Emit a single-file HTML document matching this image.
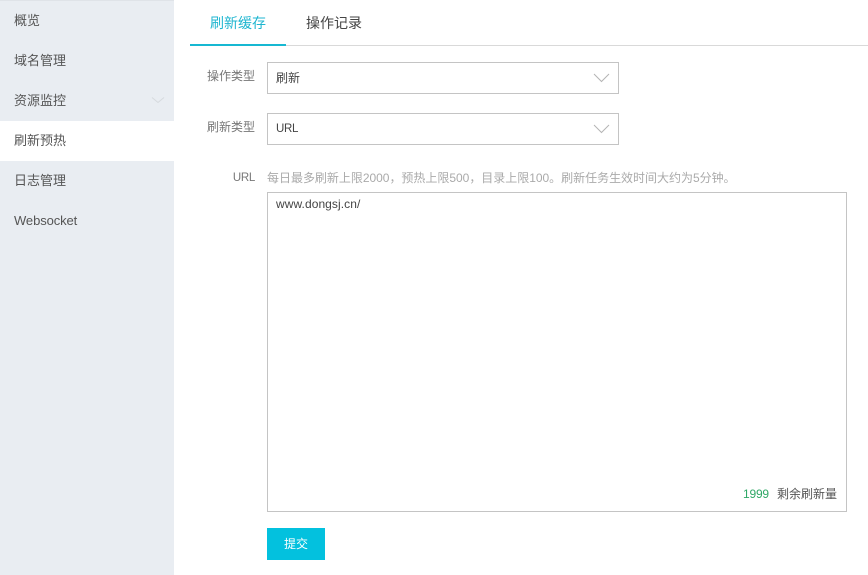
<!DOCTYPE html>
<html lang="zh">
<head>
<meta charset="utf-8">
<style>
html,body{margin:0;padding:0;width:868px;height:575px;overflow:hidden;background:#fff;}
body{position:relative;font-family:"Liberation Sans","Noto Sans CJK SC",sans-serif;font-size:12px;color:#333;}
.a{position:absolute;white-space:nowrap;}
#side{position:absolute;left:0;top:0;width:174px;height:575px;background:#e9edf2;border-top:1px solid #dfe3e8;box-sizing:border-box;}
.m{position:absolute;left:14px;font-size:13px;line-height:20px;color:#555;white-space:nowrap;}
.box{position:absolute;border:1px solid #c4c4c4;box-sizing:border-box;background:#fff;}
.lab{position:absolute;right:613px;color:#777;line-height:16px;white-space:nowrap;}
</style>
</head>
<body>
<div id="side"></div>
<div class="a" style="left:0;top:121px;width:174px;height:40px;background:#fff"></div>
<div class="m" style="top:11px">概览</div>
<div class="m" style="top:51px">域名管理</div>
<div class="m" style="top:91px">资源监控</div>
<div class="m" style="top:131px">刷新预热</div>
<div class="m" style="top:171px">日志管理</div>
<div class="m" style="top:211px;letter-spacing:-0.1px">Websocket</div>
<svg class="a" style="left:151px;top:96px" width="14" height="8"><path d="M1 1.5L7 6.5L13 1.5" fill="none" stroke="#d6dade" stroke-width="1"/></svg>

<div class="a" style="left:190px;top:45px;width:678px;height:1px;background:#d9d9d9"></div>
<div class="a" style="left:190px;top:44px;width:96px;height:2px;background:#17b8d2"></div>
<div class="a" style="left:210px;top:13px;font-size:14px;line-height:20px;color:#1fb6d0">刷新缓存</div>
<div class="a" style="left:306px;top:13px;font-size:14px;line-height:20px;color:#444">操作记录</div>

<div class="lab" style="top:68px">操作类型</div>
<div class="box" style="left:267px;top:62px;width:352px;height:32px"></div>
<div class="a" style="left:276px;top:70px;line-height:16px;color:#444">刷新</div>
<svg class="a" style="left:593px;top:73px" width="18" height="11"><path d="M1 1L8.5 8.5L16 1" fill="none" stroke="#b4b4b4" stroke-width="1"/></svg>

<div class="lab" style="top:119px">刷新类型</div>
<div class="box" style="left:267px;top:113px;width:352px;height:32px"></div>
<div class="a" style="left:276px;top:121px;line-height:16px;color:#444;font-size:11.5px;letter-spacing:-0.3px">URL</div>
<svg class="a" style="left:593px;top:124px" width="18" height="11"><path d="M1 1L8.5 8.5L16 1" fill="none" stroke="#b4b4b4" stroke-width="1"/></svg>

<div class="lab" style="top:170px;font-size:11.5px;letter-spacing:-0.3px">URL</div>
<div class="a" style="left:267px;top:170px;line-height:16px;color:#aaa;letter-spacing:-0.02px">每日最多刷新上限2000，预热上限500，目录上限100。刷新任务生效时间大约为5分钟。</div>
<div class="box" style="left:267px;top:192px;width:580px;height:320px"></div>
<div class="a" style="left:276px;top:196px;line-height:16px;color:#444;letter-spacing:0.07px">www.dongsj.cn/</div>
<div class="a" style="left:743px;top:486px;line-height:16px;color:#2fa866;letter-spacing:-0.2px">1999</div>
<div class="a" style="left:777px;top:486px;line-height:16px;color:#555">剩余刷新量</div>

<div class="a" style="left:267px;top:528px;width:58px;height:32px;background:#03c1de;color:#fff;text-align:center;line-height:32px">提交</div>
</body>
</html>
